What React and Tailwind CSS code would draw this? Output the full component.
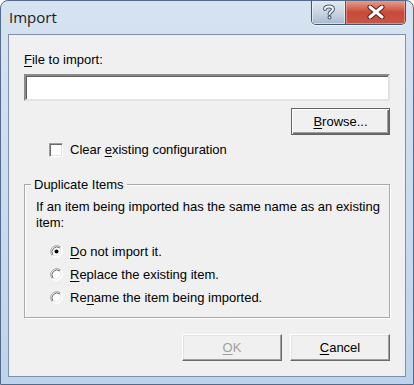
import React from "react";

const U = ({ children }) => <span className="underline underline-offset-[2px] decoration-1">{children}</span>;

function Radio({ checked }) {
  return (
    <svg width="13" height="13" viewBox="0 0 13 13" className="shrink-0">
      <circle cx="6.5" cy="6.5" r="6" fill="#ffffff" />
      <path d="M2.26 10.74 A6 6 0 0 1 10.74 2.26" stroke="#a0a0a0" strokeWidth="1" fill="none" />
      <path d="M3 10 A5 5 0 0 1 10 3" stroke="#696969" strokeWidth="1" fill="none" />
      <path d="M10.74 2.26 A6 6 0 0 1 2.26 10.74" stroke="#ffffff" strokeWidth="1" fill="none" />
      <path d="M10 3 A5 5 0 0 1 3 10" stroke="#e3e3e3" strokeWidth="1" fill="none" />
      {checked && <circle cx="6.5" cy="6.5" r="2" fill="#000000" />}
    </svg>
  );
}

const btn3d =
  "h-[27px] w-[100px] bg-[#f0f0f0] border border-t-white border-l-white border-b-[#696969] border-r-[#696969] shadow-[inset_-1px_-1px_0_#a0a0a0,inset_1px_1px_0_#e3e3e3] flex items-center justify-center";

export default function App() {
  return (
    <div
      className="w-[414px] h-[385px] overflow-hidden rounded-t-[8px] border border-[#55698a] bg-gradient-to-b from-[#d6e3f1] via-[#cbdcef] to-[#bed3ec] flex flex-col"
      style={{ fontFamily: '"Liberation Sans", Arial, sans-serif' }}
    >
      {/* Title bar */}
      <div className="h-[33px] flex items-start justify-between shrink-0">
        <div
          className="pl-[8px] pt-[6px] text-[15px] leading-[20px] text-[#1b1b1b]"
          style={{ fontFamily: '"Open Sans", "Noto Sans", sans-serif' }}
        >
          Import
        </div>
        <div className="mr-[7px] -mt-px flex h-[25px] rounded-b-[5px] border border-t-0 border-[#3f5570] overflow-hidden shadow-[0_1px_0_rgba(255,255,255,0.6)]">
          <div className="w-[34px] h-full bg-gradient-to-b from-[#e3ebf3] via-[#c9d6e4] to-[#a9bace] flex items-center justify-center border-r border-[#3f5570] shadow-[inset_0_0_0_1px_rgba(255,255,255,0.5)]">
            <svg width="14" height="16" viewBox="0 0 14 16">
              <path
                d="M3 5 C3 1.5 11 1.5 11 5 C11 7.5 7.5 7.5 7.5 10"
                stroke="#4a5a6e"
                strokeWidth="4"
                fill="none"
                strokeLinecap="round"
              />
              <path
                d="M3 5 C3 1.5 11 1.5 11 5 C11 7.5 7.5 7.5 7.5 10"
                stroke="#eef2f6"
                strokeWidth="2"
                fill="none"
                strokeLinecap="round"
              />
              <circle cx="7.5" cy="13.5" r="2" fill="#4a5a6e" />
              <circle cx="7.5" cy="13.5" r="1" fill="#eef2f6" />
            </svg>
          </div>
          <div className="w-[59px] h-full bg-gradient-to-b from-[#e8a493] via-[#c94a38] to-[#c6554a] flex items-center justify-center shadow-[inset_0_0_0_1px_rgba(255,210,200,0.45)]">
            <svg width="18" height="14" viewBox="0 0 18 14">
              <path d="M3 2 L15 12 M15 2 L3 12" stroke="#5a1d16" strokeWidth="5" strokeLinecap="round" />
              <path d="M3 2 L15 12 M15 2 L3 12" stroke="#ffffff" strokeWidth="3" strokeLinecap="round" />
            </svg>
          </div>
        </div>
      </div>

      {/* Client area */}
      <div className="mx-[7px] h-[343px] shrink-0 border border-[#7e91a8] bg-[#f0f0f0] text-[13px] leading-[15px] text-black">
        <div className="px-[15px] flex flex-col">
          <div className="mt-[17px] h-[15px]">
            <U>F</U>ile to import:
          </div>
          <div className="mt-[7px] h-[27px] bg-white border-2 border-t-[#8a8a8a] border-l-[#8a8a8a] border-b-[#e3e3e3] border-r-[#e3e3e3] shadow-[inset_1px_1px_0_#5f5f5f]" />
          <div className="mt-[7px] flex justify-end">
            <div className="h-[27px] w-[99px] bg-[#f0f0f0] border border-[#646464] shadow-[inset_1px_1px_0_#ffffff,inset_-1px_-1px_0_#696969,inset_-2px_-2px_0_#a0a0a0] flex items-center justify-center">
              <span>
                <U>B</U>rowse...
              </span>
            </div>
          </div>
          <div className="mt-[7px] h-[15px] flex items-center pl-[25px]">
            <div className="w-[14px] h-[14px] bg-white border border-t-[#a0a0a0] border-l-[#a0a0a0] border-b-white border-r-white shadow-[inset_1px_1px_0_#696969,inset_-1px_-1px_0_#e3e3e3]" />
            <span className="ml-[7px]">
              Clear <U>e</U>xisting configuration
            </span>
          </div>

          {/* Group box */}
          <div className="relative mt-[27px] h-[134px] border border-[#a9a9a9] shadow-[inset_1px_1px_0_#ffffff,1px_1px_0_#ffffff]">
            <div className="absolute -top-[8px] left-[6px] px-[3px] bg-[#f0f0f0] leading-[15px]">Duplicate Items</div>
            <div className="pl-[11px] pt-[14px] w-[362px] leading-[16px]">
              If an item being imported has the same name as an existing item:
            </div>
            <div className="mt-[12px] pl-[25px] flex flex-col gap-[7px]">
              <div className="h-[16px] flex items-center">
                <Radio checked />
                <span className="ml-[7px]">
                  <U>D</U>o not import it.
                </span>
              </div>
              <div className="h-[16px] flex items-center">
                <Radio />
                <span className="ml-[7px]">
                  <U>R</U>eplace the existing item.
                </span>
              </div>
              <div className="h-[16px] flex items-center">
                <Radio />
                <span className="ml-[7px]">
                  Re<U>n</U>ame the item being imported.
                </span>
              </div>
            </div>
          </div>

          {/* Buttons */}
          <div className="mt-[16px] flex justify-end gap-[8px]">
            <div className={btn3d + " text-[#a0a0a0]"}>
              <span>
                <U>O</U>K
              </span>
            </div>
            <div className={btn3d}>
              <span>
                <U>C</U>ancel
              </span>
            </div>
          </div>
        </div>
      </div>
    </div>
  );
}
